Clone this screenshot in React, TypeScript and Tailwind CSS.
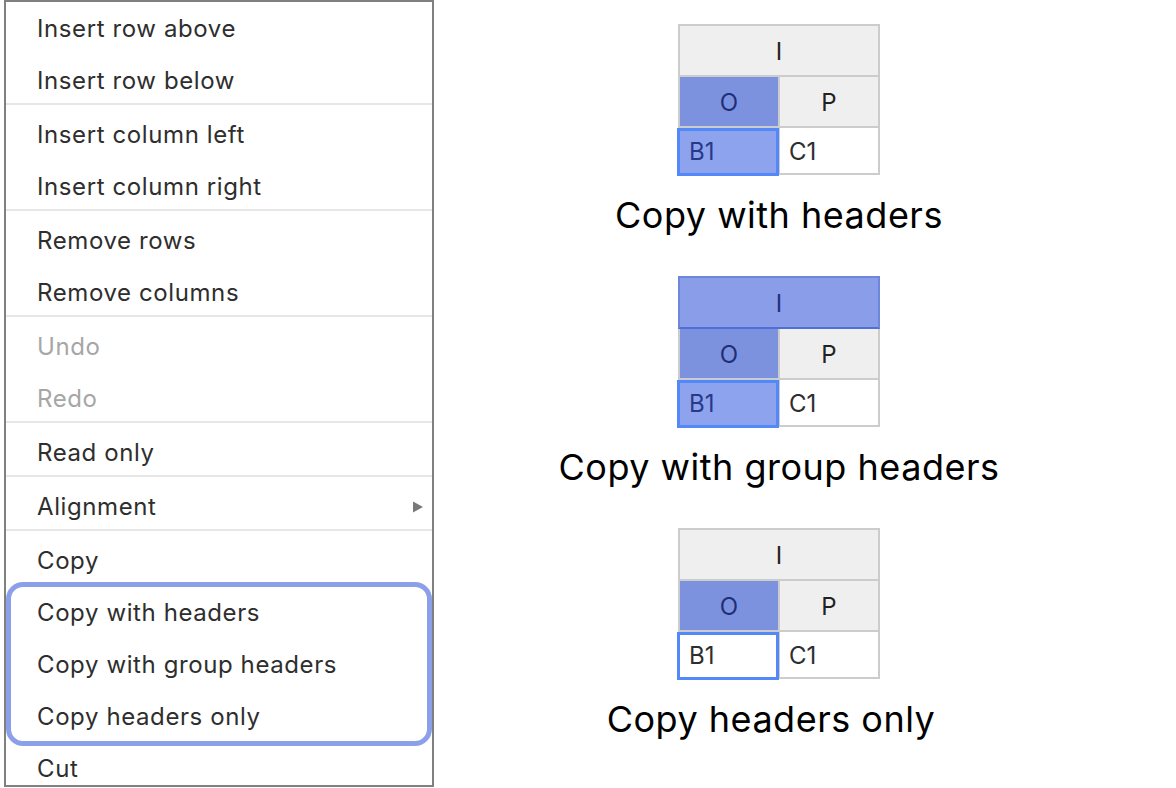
import type { ReactNode } from "react";

type Item = { label: string; disabled?: boolean; submenu?: boolean };

const GROUPS: Item[][] = [
  [{ label: "Insert row above" }, { label: "Insert row below" }],
  [{ label: "Insert column left" }, { label: "Insert column right" }],
  [{ label: "Remove rows" }, { label: "Remove columns" }],
  [{ label: "Undo", disabled: true }, { label: "Redo", disabled: true }],
  [{ label: "Read only" }],
  [{ label: "Alignment", submenu: true }],
  [
    { label: "Copy" },
    { label: "Copy with headers" },
    { label: "Copy with group headers" },
    { label: "Copy headers only" },
    { label: "Cut" },
  ],
];

const FONT = "font-['Inter','Liberation_Sans',sans-serif]";

const MenuRow = ({ item, first }: { item: Item; first?: boolean }) => (
  <div
    className={`flex items-center justify-between pl-[31px] pr-[8px] ${
      first ? "h-[49px] pt-[5px]" : "h-[52px] pt-[8px]"
    } text-[24px] tracking-[0.6px] ${item.disabled ? "text-[#a6a6a6]" : "text-[#2e2e2e]"}`}
  >
    <span>{item.label}</span>
    {item.submenu && (
      <svg width="12" height="12" viewBox="0 0 12 12">
        <polygon points="1,0.5 11,6 1,11.5" fill="#7a7a7a" />
      </svg>
    )}
  </div>
);

const ContextMenu = () => (
  <div className="relative w-[430px] h-[787px] border-2 border-[#808080] bg-white overflow-hidden shrink-0">
    {GROUPS.map((g, gi) => (
      <div key={gi} className={gi > 0 ? "border-t-2 border-[#e6e6e6]" : ""}>
        {g.map((it, i) => (
          <MenuRow key={it.label} item={it} first={gi === 0 && i === 0} />
        ))}
      </div>
    ))}
    {/* highlight around the copy-with-headers group */}
    <div className="absolute left-0 right-0 top-[580px] h-[164px] rounded-[17px] border-[5px] border-[#8ca0ea]" />
  </div>
);

const Cell = ({
  children,
  className = "",
  align = "center",
  selected,
}: {
  children: ReactNode;
  className?: string;
  align?: "center" | "left";
  selected?: boolean;
}) => (
  <div
    className={`relative flex items-center pt-[3px] border-r-2 border-b-2 border-[#cccccc] ${
      align === "center" ? "justify-center" : "pl-[9px]"
    } ${className}`}
  >
    {children}
    {selected && (
      <div className="absolute left-[-3px] right-[-1px] top-0 bottom-[-3px] border-[3px] border-[#5288f7]" />
    )}
  </div>
);

const MiniTable = ({ groupSelected, cellSelected }: { groupSelected?: boolean; cellSelected?: boolean }) => (
  <div className="w-[202px] border-l-2 border-t-2 border-[#cccccc] text-[24px]">
    <div
      className={`relative h-[51px] flex items-center justify-center pt-[3px] border-r-2 border-b-2 border-[#cccccc] ${
        groupSelected ? "bg-[#8a9de8] text-[#1f3282]" : "bg-[#efefef] text-[#222]"
      }`}
    >
      I
      {groupSelected && (
        <div className="absolute left-[-2px] top-[-2px] right-[-2px] bottom-[-2px] border-2 border-[#6e87dc] border-b-[#5070d8]" />
      )}
    </div>
    <div className="grid grid-cols-2 h-[51px]">
      <Cell className="bg-[#7d92de] text-[#1e2f7a]">O</Cell>
      <Cell className="bg-[#efefef] text-[#222]">P</Cell>
    </div>
    <div className="grid grid-cols-2 h-[47px]">
      <Cell
        align="left"
        selected
        className={cellSelected ? "bg-[#8ea3ee] text-[#28398a]" : "bg-white text-[#2e2e2e]"}
      >
        B1
      </Cell>
      <Cell align="left" className="bg-white text-[#2e2e2e]">
        C1
      </Cell>
    </div>
  </div>
);

const Example = ({
  caption,
  shift = "",
  children,
}: {
  caption: string;
  shift?: string;
  children: ReactNode;
}) => (
  <div className="flex flex-col items-center mb-[37px]">
    {children}
    <div
      className={`mt-[16px] h-[48px] leading-[48px] text-[36px] tracking-[0.5px] text-black whitespace-nowrap ${shift}`}
    >
      {caption}
    </div>
  </div>
);

export default function App() {
  return (
    <div className={`w-[1176px] h-[788px] bg-white flex pl-[4px] overflow-hidden ${FONT}`}>
      <ContextMenu />
      <div className="w-[690px] flex flex-col items-center pt-[24px]">
        <Example caption="Copy with headers">
          <MiniTable cellSelected />
        </Example>
        <Example caption="Copy with group headers">
          <MiniTable groupSelected cellSelected />
        </Example>
        <Example caption="Copy headers only" shift="pr-[16px]">
          <MiniTable />
        </Example>
      </div>
    </div>
  );
}
